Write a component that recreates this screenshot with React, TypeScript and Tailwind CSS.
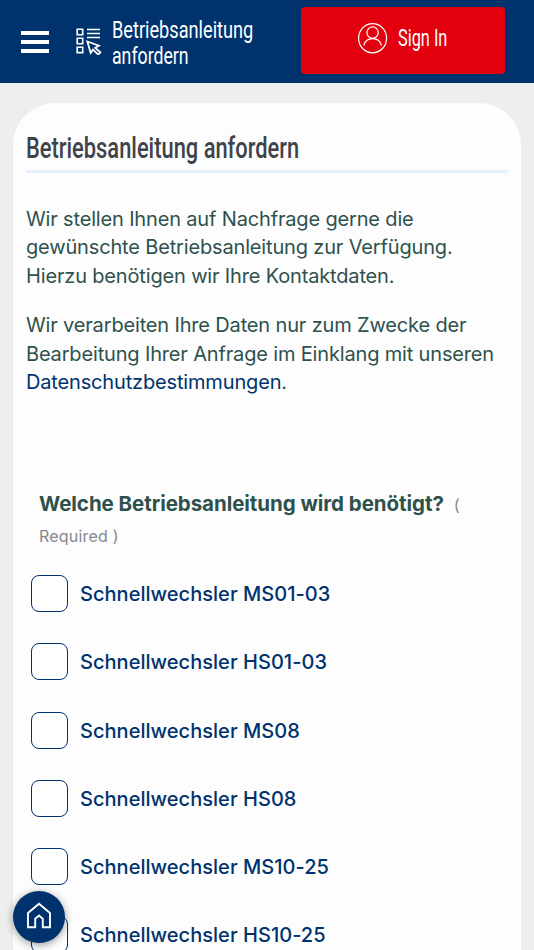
import React, { useState } from 'react';

const MANUALS = [
  'Schnellwechsler MS01-03',
  'Schnellwechsler HS01-03',
  'Schnellwechsler MS08',
  'Schnellwechsler HS08',
  'Schnellwechsler MS10-25',
  'Schnellwechsler HS10-25',
];

function ManualIcon() {
  return (
    <svg width="28" height="28" viewBox="0 0 28 28" fill="none" stroke="white" strokeWidth="1.6">
      <path d="M2.2 2.3h5.5v5.4H2.2zM2.2 11.3h5.5v5.4H2.2zM2.2 20.2h5.5v5.4H2.2z" />
      <path d="M12 2.5h13M12 6.5h13M12 10.5h13" />
      <path d="M12.3 14.5l11.6 4.2-3.7 2.1 5.2 4.6-2.2 2.2-5.2-5-2.3 3.4z" strokeWidth="1.8" />
    </svg>
  );
}

function UserIcon() {
  return (
    <svg width="30" height="32" viewBox="0 0 30 32" fill="none" stroke="white" strokeWidth="1.2">
      <ellipse cx="14.6" cy="16.2" rx="14" ry="14.6" />
      <circle cx="14.6" cy="10.6" r="5.7" />
      <path d="M5.7 23.5c1.2-4.3 4.5-6.9 8.9-6.9s7.7 2.6 8.9 6.9" />
    </svg>
  );
}

function HomeIcon() {
  return (
    <svg width="26" height="28" viewBox="0 0 26 28" fill="none" stroke="white" strokeWidth="1.9">
      <path d="M2 12L13 2.700l11 9.300V26.200h-7.200v-8.400L13 14.500l-3.800 3.300v8.400H2z" />
    </svg>
  );
}

export default function App() {
  const [selected, setSelected] = useState<string[]>([]);

  const toggle = (name: string) => {
    setSelected((prev) => (prev.includes(name) ? prev.filter((n) => n !== name) : [...prev, name]));
  };

  return (
    <div className="relative h-[950px] w-[534px] overflow-hidden bg-[#eeeeee] font-['Inter',sans-serif]">
      <header className="flex h-[83px] items-start bg-[#00336e] text-white">
        <button className="mt-[31px] ml-[21px] flex w-7 flex-col gap-[5px]" aria-label="Menu">
          <span className="h-1 w-full bg-white" />
          <span className="h-1 w-full bg-white" />
          <span className="h-1 w-full bg-white" />
        </button>
        <div className="mt-[27px] ml-[26px] w-7">
          <ManualIcon />
        </div>
        <div className="mt-[17px] ml-[9px] w-[188.5px] font-['Roboto',sans-serif] text-2xl leading-[26px]">
          <div className="w-max origin-left scale-x-[0.757]">Betriebsanleitung</div>
          <div className="w-max origin-left scale-x-[0.737]">anfordern</div>
        </div>
        <button className="mt-[7px] flex h-[67px] w-[204px] items-start rounded bg-[#e3000f] pt-[15px] pl-[57px]">
          <UserIcon />
          <span className="ml-[10px] w-max origin-left scale-x-[0.68] font-['Roboto',sans-serif] text-2xl leading-[32px] whitespace-nowrap">Sign In</span>
        </button>
      </header>

      <main className="mx-[13px] mt-[20px] h-[900px] rounded-t-[42px] bg-[#fdfdfd] px-[13px] pt-[24px]">
        <h1 className="h-[46px] border-b-[3px] border-[#e6f0ff] font-['Roboto',sans-serif] text-[30px] leading-[42px] font-medium text-[#3f4349]">
          <span className="inline-block origin-left scale-x-[0.729] whitespace-nowrap">Betriebsanleitung anfordern</span>
        </h1>

        <div className="mt-[32px] text-xl leading-[28.4px] tracking-[-0.16px] whitespace-nowrap text-[#2e514e]">
          <p>
            Wir stellen Ihnen auf Nachfrage gerne die
            <br />
            gewünschte Betriebsanleitung zur Verfügung.
            <br />
            Hierzu benötigen wir Ihre Kontaktdaten.
          </p>
          <p className="mt-[21px]">
            Wir verarbeiten Ihre Daten nur zum Zwecke der
            <br />
            Bearbeitung Ihrer Anfrage im Einklang mit unseren
            <br />
            <a className="text-[#00336e]">Datenschutzbestimmungen</a>.
          </p>
        </div>

        <fieldset className="mt-[92px]">
          <legend className="ml-[13px] leading-[31px] whitespace-nowrap">
            <span className="text-[20.5px] font-bold tracking-[-0.05px] text-[#2e514e]">Welche Betriebsanleitung wird benötigt?</span>
            <span className="ml-[10px] text-base text-[#85888f]">(</span>
            <br />
            <span className="text-base tracking-[0.2px] text-[#85888f]">Required )</span>
          </legend>
          <div className="mt-[23px] ml-[5px] flex flex-col gap-[32.3px]">
            {MANUALS.map((name) => (
              <label key={name} className="flex h-9 items-center">
                <input
                  type="checkbox"
                  className="h-[37px] w-[37px] shrink-0 appearance-none rounded-lg border-[1.5px] border-[#00336e] bg-white checked:bg-[#00336e]"
                  checked={selected.includes(name)}
                  onChange={() => toggle(name)}
                />
                <span className="mt-[1px] ml-[12px] text-xl font-medium tracking-[0.03px] whitespace-nowrap text-[#00336e]">{name}</span>
              </label>
            ))}
          </div>
        </fieldset>
      </main>

      <button
        className="absolute top-[891px] left-[13px] flex h-[52px] w-[52px] items-center justify-center rounded-full bg-[#00336e] pb-[4px] shadow-[0_2px_8px_rgba(0,0,0,0.4)]"
        aria-label="Home"
      >
        <HomeIcon />
      </button>
    </div>
  );
}
